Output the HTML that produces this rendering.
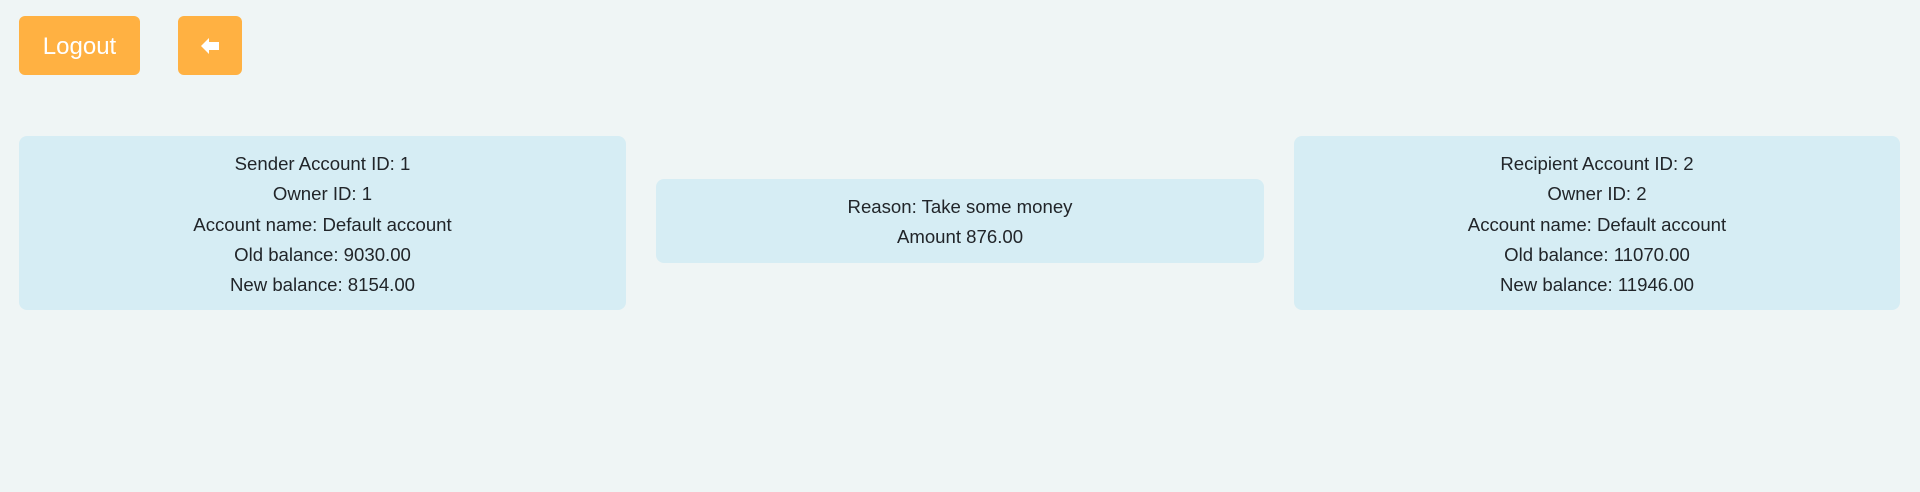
<!DOCTYPE html>
<html><head><meta charset="utf-8"><style>
html,body{margin:0;padding:0;}
body{width:1920px;height:492px;background:#eff5f5;font-family:"Liberation Sans",sans-serif;color:#212529;position:relative;overflow:hidden;}
.btn{position:absolute;top:16px;height:59px;background:#ffb142;border-radius:6px;color:#fff;display:flex;align-items:center;justify-content:center;}
.card{position:absolute;background:#d6edf4;border-radius:8px;text-align:center;font-size:18.6px;line-height:30.3px;box-sizing:border-box;padding-top:13px;}
</style></head><body>
<div class="btn" style="left:19px;width:121px;font-size:24px;padding-top:2px;box-sizing:border-box;">Logout</div>
<div class="btn" style="left:178px;width:64px;">
<svg width="20" height="18" viewBox="0 0 20 18"><path d="M1 9 L9 1 L9 5 L19 5 L19 13 L9 13 L9 17 Z" fill="#fff"/></svg>
</div>
<div class="card" style="left:19px;top:136px;width:607px;height:174px;">Sender Account ID: 1<br>Owner ID: 1<br>Account name: Default account<br>Old balance: 9030.00<br>New balance: 8154.00</div>
<div class="card" style="left:656px;top:179px;width:608px;height:84px;">Reason: Take some money<br>Amount 876.00</div>
<div class="card" style="left:1294px;top:136px;width:606px;height:174px;">Recipient Account ID: 2<br>Owner ID: 2<br>Account name: Default account<br>Old balance: 11070.00<br>New balance: 11946.00</div>
</body></html>
